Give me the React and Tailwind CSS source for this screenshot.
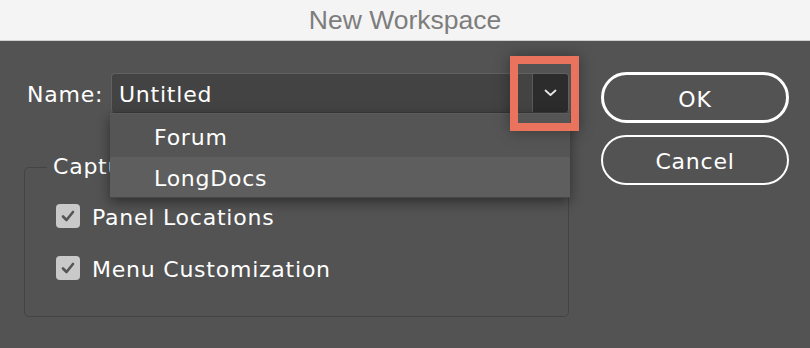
import React from "react";

const ui = { fontFamily: '"DejaVu Sans", "Open Sans", sans-serif' };

const Check = () => (
  <span className="w-6 h-6 rounded-[4px] bg-[#c9c9c9] flex items-center justify-center shrink-0">
    <svg width="14" height="12" viewBox="0 0 14 12" fill="none">
      <path d="M2 6.5 L5.5 10 L12 2" stroke="#555555" strokeWidth="2.6" strokeLinecap="round" strokeLinejoin="round" />
    </svg>
  </span>
);

const App = () => {
  return (
    <div className="w-[810px] h-[348px] flex flex-col overflow-hidden bg-[#535353]" style={ui}>
      {/* Title bar */}
      <div className="h-[41px] shrink-0 bg-[#f4f4f4] border-b border-[#cfcfcf] flex items-center justify-center">
        <span className="text-[26.5px] text-[#7d7d7d] leading-none" style={{ fontFamily: '"Liberation Sans", Arial, sans-serif' }}>
          New Workspace
        </span>
      </div>

      <div className="flex-1 flex text-white text-[22px] tracking-[0.035em]">
        {/* Left side */}
        <div className="w-[600px] shrink-0 pt-[32px]">
          <div className="flex items-center pl-[27px]">
            <span className="w-[84px] pt-[3px]">Name:</span>
            <div className="relative w-[458px] h-[40px]">
              <div className="h-full flex rounded-[4px] bg-[#434343] border border-[#616161] border-b-[#3b3b3b] overflow-hidden">
                <div className="flex-1 flex items-center pl-[7px] pt-[3px]">Untitled</div>
                <div className="w-[36px] bg-[#2c2c2c] border-l border-[#5a5a5a] flex items-center justify-center">
                  <svg width="13" height="8" viewBox="0 0 13 8" fill="none">
                    <path d="M1.5 1.5 L6.5 6 L11.5 1.5" stroke="#e6e6e6" strokeWidth="1.8" strokeLinecap="round" strokeLinejoin="round" />
                  </svg>
                </div>
              </div>

              {/* Open dropdown menu */}
              <div className="absolute left-[-1px] top-[40px] w-[460px] z-10 shadow-[0_4px_12px_rgba(0,0,0,0.45)] border-t border-[#5c5c5c]">
                <div className="h-[43px] bg-[#555555] flex items-center pl-[44px] pt-[3px]">Forum</div>
                <div className="h-[41px] bg-[#5e5e5e] flex items-center pl-[44px] pt-[3px] border-b border-[#474747]">LongDocs</div>
              </div>

              {/* Highlight box */}
              <div className="absolute left-[399px] top-[-17px] w-[69px] h-[75px] border-[8px] border-[#ea735e] z-20 shadow-[0_0_14px_rgba(0,0,0,0.35)]" />
            </div>
          </div>

          <fieldset className="ml-[24px] mt-[42px] w-[545px] h-[162px] border border-[#444444] rounded-[5px]">
            <legend className="ml-[22px] px-[6px] leading-[24px]">Capture</legend>
            <div className="flex flex-col gap-[28px] pt-[25px] pl-[31px]">
              <label className="flex items-center gap-[12px] h-6">
                <Check />
                <span className="pt-[2px]">Panel Locations</span>
              </label>
              <label className="flex items-center gap-[12px] h-6">
                <Check />
                <span className="pt-[2px]">Menu Customization</span>
              </label>
            </div>
          </fieldset>
        </div>

        {/* Buttons */}
        <div className="flex flex-col gap-[12px] pt-[31px] pl-[1px]">
          <button className="w-[188px] h-[51px] rounded-full border-[3px] border-white text-white pt-[3px]">OK</button>
          <button className="w-[188px] h-[50px] rounded-full border-2 border-white text-white pt-[3px]">Cancel</button>
        </div>
      </div>
    </div>
  );
};

export default App;
